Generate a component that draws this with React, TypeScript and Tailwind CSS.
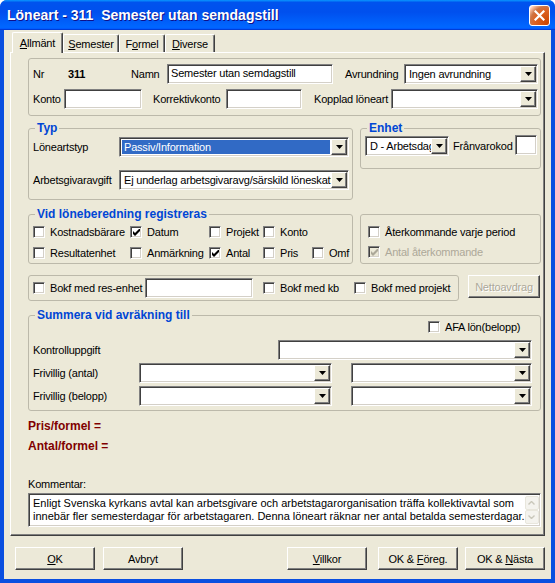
import React from 'react';

const sunken =
  'border border-t-[#808080] border-l-[#808080] border-b-white border-r-white shadow-[inset_1px_1px_0_#404040,inset_-1px_-1px_0_#d4d0c8]';
const raised =
  'border border-t-white border-l-white border-b-[#404040] border-r-[#404040] shadow-[inset_-1px_-1px_0_#808080] bg-[#ece9d8]';

function Arrow() {
  return (
    <svg width="7" height="4" viewBox="0 0 7 4">
      <path d="M0 0h7L3.5 4z" fill="#000" />
    </svg>
  );
}

function Combo({ className = '', value = '', selected = false }: { className?: string; value?: string; selected?: boolean }) {
  return (
    <div className={`flex h-[20px] shrink-0 bg-white p-[1px] ${sunken} ${className}`}>
      <div className="min-w-0 flex-1 overflow-hidden p-[1px]">
        <div className={`h-full whitespace-nowrap pl-[2px] leading-[14px] ${selected ? 'bg-[#316ac5] text-white' : ''}`}>{value}</div>
      </div>
      <div className={`flex w-[16px] shrink-0 items-center justify-center ${raised}`}>
        <Arrow />
      </div>
    </div>
  );
}

function TextBox({ className = '', children }: { className?: string; children?: React.ReactNode }) {
  return (
    <div className={`h-[20px] shrink-0 overflow-hidden whitespace-nowrap bg-white px-[3px] leading-[17px] ${sunken} ${className}`}>
      {children}
    </div>
  );
}

function Check({ checked = false, disabled = false }: { checked?: boolean; disabled?: boolean }) {
  return (
    <span className={`flex h-[12px] w-[12px] shrink-0 items-center justify-center ${sunken} ${disabled ? 'bg-[#ece9d8]' : 'bg-white'}`}>
      {checked && (
        <svg width="7" height="7" viewBox="0 0 7 7">
          <path d="M0 2L2 4L7 -1V2L2 7L0 5Z" fill={disabled ? '#aca899' : '#000'} />
        </svg>
      )}
    </span>
  );
}

function CheckLabel({ label, checked, disabled, className = '' }: { label: string; checked?: boolean; disabled?: boolean; className?: string }) {
  return (
    <div className={`flex shrink-0 items-center ${className}`}>
      <Check checked={checked} disabled={disabled} />
      <span className={`ml-[5px] whitespace-nowrap ${disabled ? 'text-[#aca899]' : ''}`}>{label}</span>
    </div>
  );
}

function Group({ title, className = '', children }: { title?: string; className?: string; children?: React.ReactNode }) {
  return (
    <div className={`relative shrink-0 rounded-[3px] border border-[#bcb9aa] ${className}`}>
      {title && (
        <span className="absolute left-[6px] top-[-8px] bg-[#ece9d8] px-[2px] text-[12px] font-bold leading-[14px] tracking-normal text-[#0046d5]">
          {title}
        </span>
      )}
      {children}
    </div>
  );
}

function Btn({ className = '', children, disabled }: { className?: string; children?: React.ReactNode; disabled?: boolean }) {
  return (
    <div
      className={`flex shrink-0 items-center justify-center ${raised} ${disabled ? 'text-[#aca899] [text-shadow:1px_1px_0_#fff]' : ''} ${className}`}
    >
      {children}
    </div>
  );
}

function Tab({ children, active, className = '' }: { children: React.ReactNode; active?: boolean; className?: string }) {
  return (
    <div
      className={`relative z-10 flex shrink-0 items-center justify-center rounded-t-[2px] border border-b-0 border-t-white border-l-white border-r-[#404040] bg-[#ece9d8] shadow-[inset_-1px_0_0_#808080] ${
        active ? '-mb-[1px] h-[21px]' : 'h-[18px]'
      } ${className}`}
    >
      {children}
    </div>
  );
}

export default function App() {
  return (
    <div className="flex h-[583px] w-[555px] flex-col overflow-hidden whitespace-nowrap rounded-t-[7px] bg-[#0a4fe0] font-['Liberation_Sans',Arial,sans-serif] text-[11px] leading-[14px] tracking-[-0.2px] text-black">
      {/* title bar */}
      <div className="flex h-[30px] shrink-0 items-center pl-[7px] pr-[5px] bg-[linear-gradient(180deg,#0997ff,#0053ee_8%,#0050ee_40%,#06f_88%,#06f_93%,#005bff_95%,#003dd7_96%,#003dd7)]">
        <span className="flex-1 whitespace-pre text-[14px] font-bold tracking-normal text-white [text-shadow:1px_1px_#0f1089]">
          Löneart - 311  Semester utan semdagstill
        </span>
        <div className="flex h-[21px] w-[21px] items-center justify-center rounded-[3px] border border-white bg-[radial-gradient(circle_at_90%_90%,#cc4600_0%,#dc6527_55%,#cd7546_70%,#ffccb2_90%,#fff_100%)]">
          <svg width="11" height="11" viewBox="0 0 11 11">
            <path d="M1.5 1.5l8 8M9.5 1.5l-8 8" stroke="#fff" strokeWidth="2.2" strokeLinecap="square" />
          </svg>
        </div>
      </div>

      <div className="mx-[4px] mb-[4px] flex flex-1 flex-col bg-[#ece9d8]">
        {/* tabs */}
        <div className="ml-[8px] mt-[2px] flex h-[20px] items-end">
          <Tab active className="w-[51px]">
            <span>
              <u>A</u>llmänt
            </span>
          </Tab>
          <Tab className="w-[56px]">
            <span>
              <u>S</u>emester
            </span>
          </Tab>
          <Tab className="w-[46px]">
            <span>
              F<u>o</u>rmel
            </span>
          </Tab>
          <Tab className="w-[50px]">
            <span>
              <u>D</u>iverse
            </span>
          </Tab>
        </div>

        {/* tab panel */}
        <div className="ml-[6px] flex h-[484px] w-[535px] shrink-0 flex-col border border-t-white border-l-white border-r-[#404040] border-b-[#404040] pl-[17px] pt-[5px] shadow-[inset_-1px_-1px_0_#808080]">
          {/* basic fields */}
          <Group className="flex h-[58px] w-[513px] flex-col gap-[5px] pl-[4px] pt-[5px]">
            <div className="flex h-[20px] items-center">
              <span className="w-[35px] shrink-0">Nr</span>
              <span className="w-[63px] shrink-0 font-bold">311</span>
              <span className="w-[36px] shrink-0">Namn</span>
              <TextBox className="w-[166px]">Semester utan semdagstill</TextBox>
              <span className="ml-[12px] w-[59px] shrink-0">Avrundning</span>
              <Combo className="w-[134px]" value="Ingen avrundning" />
            </div>
            <div className="flex h-[20px] items-center">
              <span className="w-[31px] shrink-0">Konto</span>
              <TextBox className="w-[78px]" />
              <span className="ml-[11px] w-[73px] shrink-0">Korrektivkonto</span>
              <TextBox className="w-[76px]" />
              <span className="ml-[12px] w-[77px] shrink-0">Kopplad löneart</span>
              <Combo className="w-[147px]" />
            </div>
          </Group>

          {/* Typ + Enhet */}
          <div className="mt-[12px] flex items-start">
            <Group title="Typ" className="flex h-[72px] w-[325px] flex-col gap-[13px] pl-[4px] pt-[8px]">
              <div className="flex h-[20px] items-center">
                <span className="w-[86px] shrink-0">Löneartstyp</span>
                <Combo className="w-[230px]" value="Passiv/Information" selected />
              </div>
              <div className="flex h-[20px] items-center">
                <span className="w-[86px] shrink-0">Arbetsgivaravgift</span>
                <Combo className="w-[230px]" value="Ej underlag arbetsgivaravg/särskild löneskatt" />
              </div>
            </Group>
            <Group title="Enhet" className="ml-[7px] flex h-[41px] w-[181px] items-start pl-[4px] pt-[7px]">
              <Combo className="w-[84px]" value="D - Arbetsdag" />
              <span className="ml-[4px] mt-[3px] shrink-0">Frånvarokod</span>
              <TextBox className="ml-[2px] -mt-[1px] h-[19px] w-[22px]" />
            </Group>
          </div>

          {/* Vid löneberedning + återkommande */}
          <div className="mt-[14px] flex items-start">
            <Group title="Vid löneberedning registreras" className="flex h-[50px] w-[325px] flex-col gap-[9px] pl-[4px] pt-[11px]">
              <div className="flex h-[12px] items-center">
                <CheckLabel className="w-[97px]" label="Kostnadsbärare" />
                <CheckLabel className="w-[79px]" label="Datum" checked />
                <CheckLabel className="w-[54px]" label="Projekt" />
                <CheckLabel label="Konto" />
              </div>
              <div className="flex h-[12px] items-center">
                <CheckLabel className="w-[97px]" label="Resultatenhet" />
                <CheckLabel className="w-[79px]" label="Anmärkning" />
                <CheckLabel className="w-[54px]" label="Antal" checked />
                <CheckLabel className="w-[49px]" label="Pris" />
                <CheckLabel label="Omf" />
              </div>
            </Group>
            <Group className="ml-[7px] flex h-[50px] w-[181px] flex-col gap-[8px] pl-[7px] pt-[11px]">
              <CheckLabel className="h-[12px]" label="Återkommande varje period" />
              <CheckLabel className="h-[12px]" label="Antal återkommande" checked disabled />
            </Group>
          </div>

          {/* Bokf */}
          <div className="mt-[11px] flex items-start">
            <Group className="flex h-[26px] w-[431px] items-center pl-[4px]">
              <CheckLabel className="w-[112px]" label="Bokf med res-enhet" />
              <TextBox className="w-[108px]" />
              <CheckLabel className="ml-[10px] w-[91px]" label="Bokf med kb" />
              <CheckLabel label="Bokf med projekt" />
            </Group>
            <Btn disabled className="ml-[9px] h-[23px] w-[72px]">
              Nettoavdrag
            </Btn>
          </div>

          {/* Summera */}
          <Group title="Summera vid avräkning till" className="mt-[14px] flex h-[96px] w-[513px] flex-col pl-[4px] pt-[5px]">
            <CheckLabel className="ml-[395px] h-[12px]" label="AFA lön(belopp)" />
            <div className="mt-[7px] flex h-[20px] items-center">
              <span className="w-[245px] shrink-0">Kontrolluppgift</span>
              <Combo className="w-[254px]" />
            </div>
            <div className="mt-[3px] flex h-[20px] items-center">
              <span className="w-[106px] shrink-0">Frivillig (antal)</span>
              <Combo className="w-[193px]" />
              <Combo className="ml-[19px] w-[181px]" />
            </div>
            <div className="mt-[3px] flex h-[20px] items-center">
              <span className="w-[106px] shrink-0">Frivillig (belopp)</span>
              <Combo className="w-[193px]" />
              <Combo className="ml-[19px] w-[181px]" />
            </div>
          </Group>

          <div className="mt-[8px] text-[12px] font-bold tracking-normal text-[#800000]">Pris/formel =</div>
          <div className="mt-[6px] text-[12px] font-bold tracking-normal text-[#800000]">Antal/formel =</div>

          <div className="mt-[24px]">Kommentar:</div>
          <div className={`mt-[2px] flex h-[34px] w-[513px] bg-white p-[1px] tracking-normal ${sunken}`}>
            <div className="flex-1 pl-[3px] pt-[2px] leading-[13px]">
              <div className="whitespace-nowrap">
                Enligt Svenska kyrkans avtal kan arbetsgivare och arbetstagarorganisation träffa kollektivavtal som
              </div>
              <div className="whitespace-nowrap">
                innebär fler semesterdagar för arbetstagaren. Denna löneart räknar ner antal betalda semesterdagar.
              </div>
            </div>
            <div className="flex w-[15px] shrink-0 flex-col justify-between py-[1px] pr-[1px]">
              <div className="flex h-[14px] items-center justify-center rounded-[2px] border border-[#e8e6dc] bg-[#f4f3ee]">
                <svg width="7" height="4" viewBox="0 0 7 4">
                  <path d="M0.5 3.5L3.5 0.5L6.5 3.5" fill="none" stroke="#c9c7ba" strokeWidth="1.4" />
                </svg>
              </div>
              <div className="flex h-[14px] items-center justify-center rounded-[2px] border border-[#e8e6dc] bg-[#f4f3ee]">
                <svg width="7" height="4" viewBox="0 0 7 4">
                  <path d="M0.5 0.5L3.5 3.5L6.5 0.5" fill="none" stroke="#c9c7ba" strokeWidth="1.4" />
                </svg>
              </div>
            </div>
          </div>
        </div>

        {/* buttons */}
        <div className="ml-[11px] mt-[11px] flex h-[23px]">
          <Btn className="w-[80px]">
            <span>
              <u>O</u>K
            </span>
          </Btn>
          <Btn className="ml-[8px] w-[80px]">Avbryt</Btn>
          <Btn className="ml-[104px] w-[80px]">
            <span>
              <u>V</u>illkor
            </span>
          </Btn>
          <Btn className="ml-[11px] w-[80px]">
            <span>
              OK &amp; <u>F</u>öreg.
            </span>
          </Btn>
          <Btn className="ml-[7px] w-[80px]">
            <span>
              OK &amp; <u>N</u>ästa
            </span>
          </Btn>
        </div>
      </div>
    </div>
  );
}
